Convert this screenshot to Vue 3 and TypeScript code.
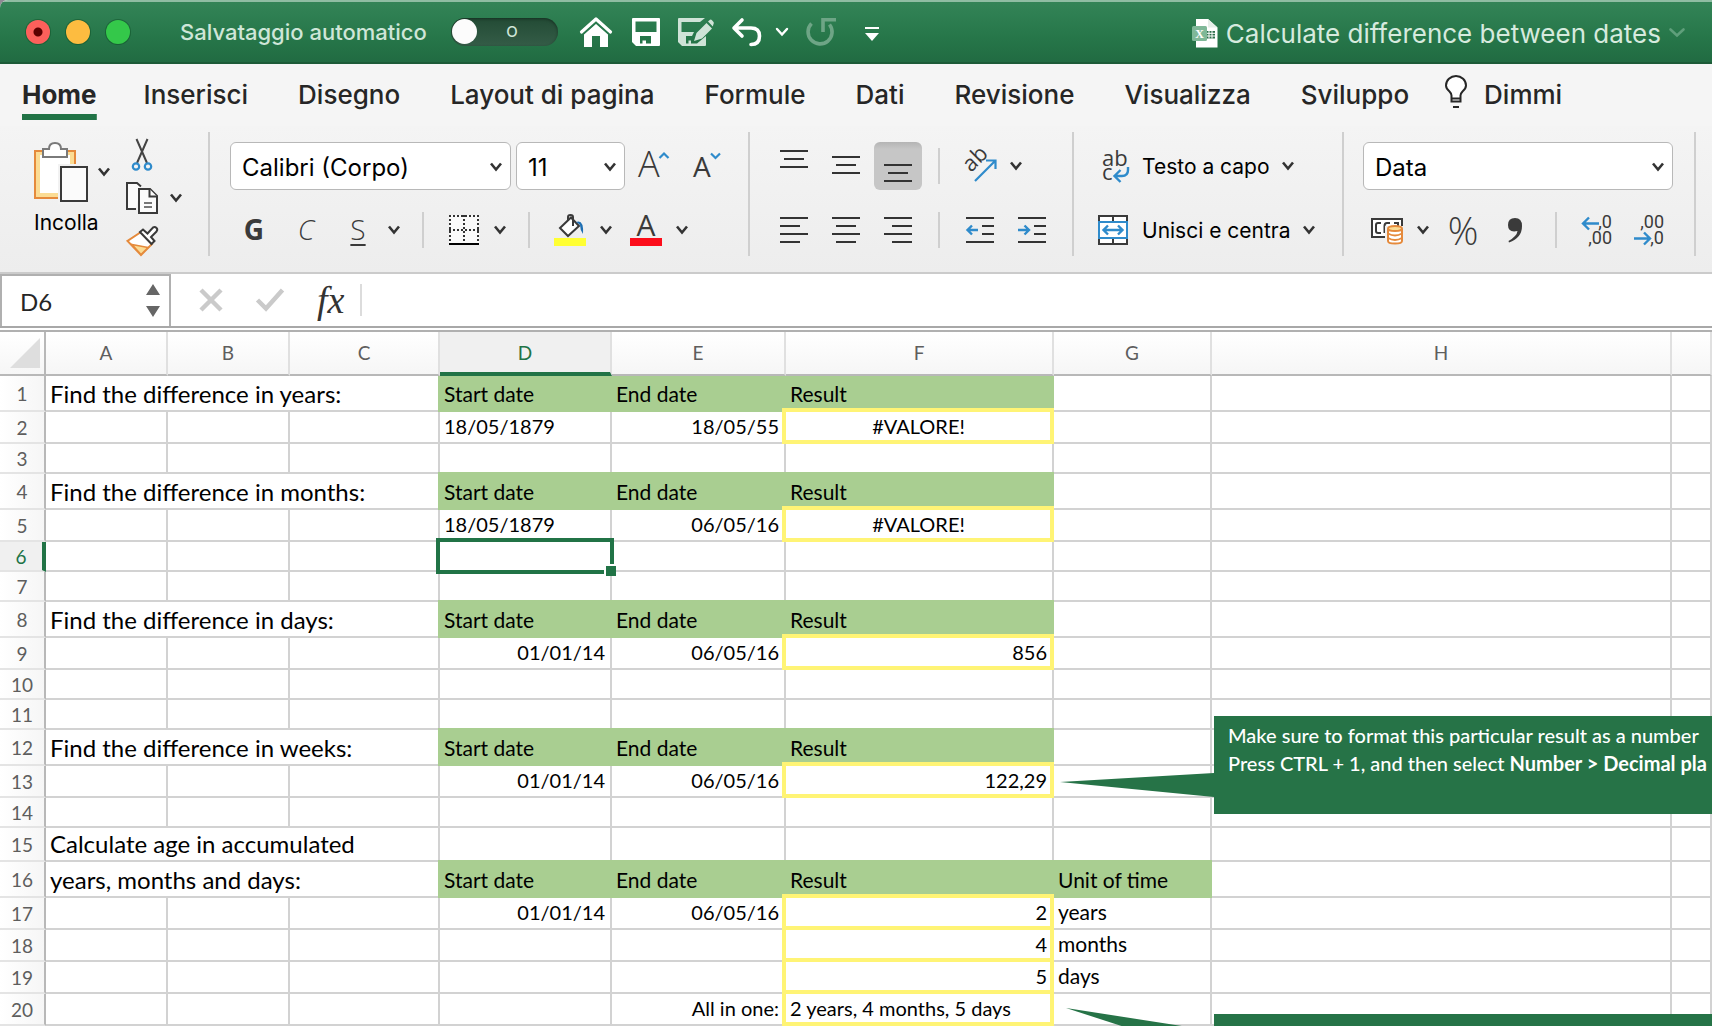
<script setup lang="ts">
import { h, ref } from 'vue'

interface Row {
  n: number
  height: number
  label?: string
  head?: boolean
  start?: string
  startText?: boolean
  end?: string
  result?: string
  resultAlign?: 'left' | 'center' | 'right'
  unit?: string
}

const tabs = ['Home', 'Inserisci', 'Disegno', 'Layout di pagina', 'Formule', 'Dati', 'Revisione', 'Visualizza', 'Sviluppo']
const activeTab = ref('Home')
const autosave = ref(false)
const cellName = ref('D6')
const formula = ref('')

const columns = ['A', 'B', 'C', 'D', 'E', 'F', 'G', 'H', '']

const header = { head: true, start: 'Start date', end: 'End date', result: 'Result' }

const rows: Row[] = [
  { n: 1, height: 36, label: 'Find the difference in years:', ...header },
  { n: 2, height: 32, start: '18/05/1879', startText: true, end: '18/05/55', result: '#VALORE!', resultAlign: 'center' },
  { n: 3, height: 30 },
  { n: 4, height: 36, label: 'Find the difference in months:', ...header },
  { n: 5, height: 32, start: '18/05/1879', startText: true, end: '06/05/16', result: '#VALORE!', resultAlign: 'center' },
  { n: 6, height: 30 },
  { n: 7, height: 30 },
  { n: 8, height: 36, label: 'Find the difference in days:', ...header },
  { n: 9, height: 32, start: '01/01/14', end: '06/05/16', result: '856', resultAlign: 'right' },
  { n: 10, height: 30 },
  { n: 11, height: 30 },
  { n: 12, height: 36, label: 'Find the difference in weeks:', ...header },
  { n: 13, height: 32, start: '01/01/14', end: '06/05/16', result: '122,29', resultAlign: 'right' },
  { n: 14, height: 30 },
  { n: 15, height: 34, label: 'Calculate age in accumulated' },
  { n: 16, height: 36, label: 'years, months and days:', ...header, unit: 'Unit of time' },
  { n: 17, height: 32, start: '01/01/14', end: '06/05/16', result: '2', resultAlign: 'right', unit: 'years' },
  { n: 18, height: 32, result: '4', resultAlign: 'right', unit: 'months' },
  { n: 19, height: 32, result: '5', resultAlign: 'right', unit: 'days' },
  { n: 20, height: 32, end: 'All in one:', result: '2 years, 4 months, 5 days', resultAlign: 'left' },
]

const Chevron = () =>
  h('svg', { class: 'chevron', width: 12, height: 10, viewBox: '0 0 12 10', 'aria-hidden': 'true' }, [
    h('path', { d: 'M1 1.5L6 7.5L11 1.5', fill: 'none', stroke: 'currentColor', 'stroke-width': 2.6 }),
  ])
</script>

<template>
  <div class="window">
    <header class="titlebar">
      <div class="lights">
        <button class="light close" aria-label="Chiudi"></button>
        <button class="light minimize" aria-label="Riduci"></button>
        <button class="light zoom" aria-label="Ingrandisci"></button>
      </div>
      <label class="autosave">
        <span>Salvataggio automatico</span>
        <span class="switch">
          <input v-model="autosave" type="checkbox" />
          <span class="state">O</span>
        </span>
      </label>
      <div class="quick">
        <button class="home" aria-label="Home">
          <svg width="32" height="32" viewBox="0 0 32 32">
            <path d="M1.500 16L16 3L30.500 16" fill="none" stroke="#fff" stroke-width="3.200" stroke-linecap="round" stroke-linejoin="round" />
            <path d="M4 18L16 7.500L28 18V31H20V20H12V31H4Z" fill="#fff" />
            <path d="M3 18.500L16 7L29 18.500" fill="none" stroke="#2a7a4e" stroke-width="1.400" />
          </svg>
        </button>
        <button class="save" aria-label="Salva">
          <svg width="28" height="28" viewBox="0 0 28 28">
            <path fill="#fff" fill-rule="evenodd" d="M1 0H27Q28 0 28 1V27Q28 28 27 28H4L0 24V1Q0 0 1 0ZM3.500 3.500V14H24.500V3.500ZM8 18V25.500H10.500V22.500H14V25.500H19V18Z" />
          </svg>
        </button>
        <button class="edit" aria-label="Salva con nome">
          <svg width="36" height="32" viewBox="0 0 36 32">
            <path fill="#cfe3d7" fill-rule="evenodd" d="M1 2H27L22 6H3.500V16H16L14 20H8V27.500H10.500V24.500H13V27.500H19L28 20V29Q28 30 27 30H4L0 26V3Q0 2 1 2Z" />
            <path fill="#cfe3d7" d="M16 25L18.500 17L28.500 7L34 12.500L24 22.500ZM30 5.500L32 3.800Q33 3.200 34 4.200L35.500 6Q36.300 7 35.500 8L34.800 10.500Z" />
          </svg>
        </button>
        <button class="undo" aria-label="Annulla">
          <svg width="32" height="30" viewBox="0 0 32 30" fill="none" stroke="#fff" stroke-width="3.600" stroke-linecap="round" stroke-linejoin="round">
            <path d="M11 3L3 11L11 19M3.500 11H20Q28.500 11 28.500 19Q28.500 27.500 20 27.500" />
          </svg>
        </button>
        <button class="more" aria-label="Altre azioni da annullare">
          <svg width="12" height="10" viewBox="0 0 12 10"><path d="M1 2L6 7.500L11 2" fill="none" stroke="#fff" stroke-width="2.400" stroke-linecap="round" /></svg>
        </button>
        <button class="redo" aria-label="Ripeti">
          <svg width="32" height="32" viewBox="0 0 32 32" fill="none" stroke="#6ea586" stroke-width="3.600">
            <path d="M6.500 7.500A12 12 0 1 0 24.500 8.500" /><path d="M18 16V3.800H31" />
          </svg>
        </button>
        <button class="customize" aria-label="Personalizza">
          <svg width="14" height="16" viewBox="0 0 14 16"><path d="M0 1H14V3H0ZM0 7H14L7 15Z" fill="#fff" /></svg>
        </button>
      </div>
      <button class="doc">
        <svg width="26" height="30" viewBox="0 0 26 30">
          <path d="M4 1H16L25.500 9.500V29.500H4Z" fill="#fff" />
          <path d="M16 1V9.500H25.500" fill="#e6efe9" />
          <path d="M14 13H23V20.500H14Z" fill="#2c6f4b" />
          <path d="M14 15.300H23M14 18H23M17 13V20.500M20 13V20.500" stroke="#fff" stroke-width="1" />
          <rect x="0" y="8" width="15" height="15" rx="1.500" fill="#7fb898" />
          <text x="7.500" y="19.500" text-anchor="middle" class="x-mark">X</text>
        </svg>
        <span>Calculate difference between dates</span>
        <svg width="16" height="10" viewBox="0 0 16 10"><path d="M1.500 1.500L8 7.500L14.500 1.500" fill="none" stroke="#5f9f7b" stroke-width="2.600" stroke-linecap="round" /></svg>
      </button>
    </header>

    <nav class="tabs" role="tablist">
      <button v-for="tab in tabs" :key="tab" role="tab" :aria-selected="tab === activeTab" :class="{ active: tab === activeTab }" @click="activeTab = tab">{{ tab }}</button>
      <button class="tell">
        <svg width="22" height="34" viewBox="0 0 22 34" fill="none" stroke="#262626" stroke-width="2">
          <path d="M6.500 23.500V20.500Q6.500 18.500 4.500 16.500Q1 13.500 1 10.500A10 9.500 0 0 1 21 10.500Q21 13.500 17.500 16.500Q15.500 18.500 15.500 20.500V26.500H6.500V23.500H15.500" fill="#fff" />
          <path d="M8 32H14" />
        </svg>
        <span>Dimmi</span>
      </button>
    </nav>

    <section class="ribbon" aria-label="Home">
      <div class="group clipboard">
        <button class="paste">
          <svg width="54" height="62" viewBox="0 0 54 62">
            <path d="M1 9H41V56H1Z" fill="#fbdc94" stroke="#e58a3c" stroke-width="2" />
            <path d="M6 13H36V51H6Z" fill="#fff" />
            <path d="M9 15V7H15Q15 1 21 1Q27 1 27 7H33V15Z" fill="#fff" stroke="#7a7a7a" stroke-width="2" />
            <path d="M24 22H54V62H24Z" fill="#f2f2f2" />
            <path d="M27 25H53V59H27Z" fill="#fbfbfb" stroke="#3a3a3a" stroke-width="2" />
          </svg>
          <span>Incolla</span>
        </button>
        <button class="drop paste-drop" aria-label="Opzioni incolla"><Chevron /></button>
        <div class="clip-tools">
          <button class="tool" aria-label="Taglia">
            <svg width="32" height="32" viewBox="0 0 32 32" fill="none">
              <path d="M10.500 1L21 25M21.500 1L11 25" stroke="#444" stroke-width="2" />
              <circle cx="10" cy="28.500" r="3.200" stroke="#2f8bcb" stroke-width="2.200" /><circle cx="22" cy="28.500" r="3.200" stroke="#2f8bcb" stroke-width="2.200" />
            </svg>
          </button>
          <div class="copy">
            <button class="tool" aria-label="Copia">
              <svg width="32" height="32" viewBox="0 0 32 32" fill="#fbfbfb" stroke="#3a3a3a" stroke-width="2">
                <path d="M10 27H1V1H11L15 4.500" />
                <path d="M13 7H24L31 14V31H13Z" /><path d="M23.500 7V14.500H31" />
                <path d="M18 21H26M18 25H26" stroke="#777" />
              </svg>
            </button>
            <button class="drop" aria-label="Opzioni copia"><Chevron /></button>
          </div>
          <button class="tool" aria-label="Copia formato">
            <svg width="32" height="32" viewBox="0 0 32 32" fill="none">
              <path d="M15 6L1.500 15L15 29L26 18Z" fill="#fff" stroke="#e58a3c" stroke-width="2" />
              <path d="M6 18.500L22 21.500L15 28.500Z" fill="#fbdc94" stroke="#e58a3c" stroke-width="1.500" />
              <path d="M14 6L17 3.500L21.500 7.500L27 1.500Q29 .5 30.500 2Q32 3.500 30.500 5.500L25 11L28.500 15L25.500 18Z" fill="#fff" stroke="#3a3a3a" stroke-width="2" />
            </svg>
          </button>
        </div>
      </div>

      <div class="group font">
        <div class="line">
          <div class="combo family">
            <select aria-label="Tipo di carattere"><option>Calibri (Corpo)</option></select>
            <Chevron />
          </div>
          <div class="combo size">
            <select aria-label="Dimensione carattere"><option>11</option></select>
            <Chevron />
          </div>
          <button class="tool wide" aria-label="Aumenta dimensione carattere">
            <svg width="32" height="32" viewBox="0 0 32 32">
              <text x="0" y="27" class="glyph big">A</text>
              <path d="M21.500 8L26 3.500L30.500 8" fill="none" stroke="#2f8bcb" stroke-width="2.200" />
            </svg>
          </button>
          <button class="tool wide" aria-label="Riduci dimensione carattere">
            <svg width="32" height="32" viewBox="0 0 32 32">
              <text x="1" y="27" class="glyph mid">A</text>
              <path d="M19 3.500L23.500 8L28 3.500" fill="none" stroke="#2f8bcb" stroke-width="2.200" />
            </svg>
          </button>
        </div>
        <div class="line tools">
          <button class="tool style bold">G</button>
          <button class="tool style italic">C</button>
          <div class="split">
            <button class="tool style underline">S</button>
            <button class="drop" aria-label="Opzioni sottolineato"><Chevron /></button>
          </div>
          <span class="rule"></span>
          <div class="split">
            <button class="tool" aria-label="Bordi">
              <svg width="30" height="30" viewBox="0 0 30 30" fill="none">
                <path d="M0 0H30V30H0Z" fill="#fafafa" />
                <path d="M0 1H30M0 15H30M1 0V28M15 0V28M29 0V28" stroke="#333" stroke-width="2" stroke-dasharray="2 2" />
                <path d="M0 29H30" stroke="#000" stroke-width="2" />
              </svg>
            </button>
            <button class="drop" aria-label="Opzioni bordi"><Chevron /></button>
          </div>
          <span class="rule"></span>
          <div class="split">
            <button class="tool" aria-label="Colore riempimento">
              <svg width="32" height="32" viewBox="0 0 32 32" fill="none">
                <path d="M6 14L17 3.500L25 12L14 22Z" fill="#fff" stroke="#3a3a3a" stroke-width="2" />
                <path d="M14 7V3Q14 1 16.500 1Q19 1 19 3V12" stroke="#3a3a3a" stroke-width="2" />
                <path d="M22 8Q30 5 29 20Q26 16 26 11Q24 9 22 8Z" fill="#1e6fb3" />
                <path d="M0 24H32V32H0Z" fill="#ffff33" />
              </svg>
            </button>
            <button class="drop" aria-label="Scegli colore riempimento"><Chevron /></button>
          </div>
          <div class="split">
            <button class="tool" aria-label="Colore carattere">
              <svg width="32" height="32" viewBox="0 0 32 32">
                <text x="16" y="22" text-anchor="middle" class="glyph color">A</text>
                <path d="M0 24H32V32H0Z" fill="#fc0d1b" />
              </svg>
            </button>
            <button class="drop" aria-label="Scegli colore carattere"><Chevron /></button>
          </div>
        </div>
      </div>

      <div class="group align">
        <div class="line tools">
          <button class="tool" aria-label="Allinea in alto">
            <svg width="28" height="32" viewBox="0 0 28 32"><path d="M0 1H28M4 9H24M0 17H28" class="bars" /></svg>
          </button>
          <button class="tool" aria-label="Allinea al centro">
            <svg width="28" height="32" viewBox="0 0 28 32"><path d="M0 7H28M4 15H24M0 23H28" class="bars" /></svg>
          </button>
          <button class="tool pressed" aria-label="Allinea in basso" aria-pressed="true">
            <svg width="28" height="32" viewBox="0 0 28 32"><path d="M0 15H28M4 23H24M0 31H28" class="bars" /></svg>
          </button>
          <span class="rule"></span>
          <div class="split">
            <button class="tool" aria-label="Orientamento">
              <svg width="34" height="34" viewBox="0 0 34 34">
                <text transform="translate(8 24) rotate(-45)" class="glyph ab">ab</text>
                <path d="M12 32L32 12M23 11.500H32.500V20" fill="none" stroke="#2f8bcb" stroke-width="2.200" />
              </svg>
            </button>
            <button class="drop" aria-label="Opzioni orientamento"><Chevron /></button>
          </div>
        </div>
        <div class="line tools">
          <button class="tool" aria-label="Allinea a sinistra">
            <svg width="28" height="26" viewBox="0 0 28 26"><path d="M0 1H28M0 9H20M0 17H28M0 25H20" class="bars" /></svg>
          </button>
          <button class="tool" aria-label="Centra">
            <svg width="28" height="26" viewBox="0 0 28 26"><path d="M0 1H28M4 9H24M0 17H28M4 25H24" class="bars" /></svg>
          </button>
          <button class="tool" aria-label="Allinea a destra">
            <svg width="28" height="26" viewBox="0 0 28 26"><path d="M0 1H28M8 9H28M0 17H28M8 25H28" class="bars" /></svg>
          </button>
          <span class="rule"></span>
          <button class="tool" aria-label="Riduci rientro">
            <svg width="28" height="26" viewBox="0 0 28 26">
              <path d="M0 1H28M16 9H28M16 17H28M0 25H28" class="bars" />
              <path d="M12 13H2M6 8.500L1.500 13L6 17.500" class="arrow" />
            </svg>
          </button>
          <button class="tool" aria-label="Aumenta rientro">
            <svg width="28" height="26" viewBox="0 0 28 26">
              <path d="M0 1H28M16 9H28M16 17H28M0 25H28" class="bars" />
              <path d="M0 13H10M6.500 8.500L11 13L6.500 17.500" class="arrow" />
            </svg>
          </button>
        </div>
      </div>

      <div class="group cells">
        <div class="line">
          <button class="named">
            <svg width="34" height="34" viewBox="0 0 34 34">
              <text x="6" y="17" class="glyph ab">ab</text>
              <text x="6" y="31" class="glyph ab">c</text>
              <path d="M32 18V21Q32 27 26 27H20M24.500 21L18.500 27L24.500 33" class="arrow" />
            </svg>
            <span>Testo a capo</span>
            <Chevron />
          </button>
        </div>
        <div class="line">
          <button class="named">
            <svg width="34" height="34" viewBox="0 0 34 34" fill="none">
              <path d="M3 3H31V31H3Z" fill="#fff" stroke="#3a3a3a" stroke-width="2" />
              <path d="M17 3V31" stroke="#3a3a3a" stroke-width="2" />
              <path d="M3 9H31V25H3Z" fill="#fff" stroke="#2f8bcb" stroke-width="2" />
              <path d="M8 17H26M12 12.500L7.500 17L12 21.500M22 12.500L26.500 17L22 21.500" class="arrow" />
            </svg>
            <span>Unisci e centra</span>
            <Chevron />
          </button>
        </div>
      </div>

      <div class="group number">
        <div class="line">
          <div class="combo format">
            <select aria-label="Formato numero"><option>Data</option></select>
            <Chevron />
          </div>
        </div>
        <div class="line tools">
          <div class="split">
            <button class="tool" aria-label="Formato contabilità">
              <svg width="32" height="28" viewBox="0 0 32 28" fill="none">
                <path d="M1 3H31V21H1Z" fill="#fff" stroke="#3a3a3a" stroke-width="2" />
                <path d="M10 7H7Q5 7 5 9V15Q5 17 7 17H10M19 7H16Q13.500 7 13.500 10V17M23 7H27V12" stroke="#3a3a3a" stroke-width="2" />
                <path d="M14 10H32V28H14Z" fill="#f0f0f0" />
                <path d="M17 13V25Q17 27.500 24 27.500Q31 27.500 31 25V13" fill="#fff" stroke="#e58a3c" stroke-width="2" />
                <ellipse cx="24" cy="12.500" rx="7" ry="2.600" fill="#fbdc94" stroke="#e58a3c" stroke-width="2" />
                <path d="M17 17.500Q24 21.500 31 17.500M17 22Q24 26 31 22" stroke="#e58a3c" stroke-width="2" />
              </svg>
            </button>
            <button class="drop" aria-label="Opzioni contabilità"><Chevron /></button>
          </div>
          <button class="tool percent">%</button>
          <button class="tool" aria-label="Stile separatore">
            <svg width="16" height="26" viewBox="0 0 16 26"><path d="M8 1Q15 1 15 9Q15 21 2 25.500L1.500 24Q10 19 10.500 14Q1 16 1 8Q1 1 8 1Z" fill="#3a3a3a" /></svg>
          </button>
          <span class="rule"></span>
          <button class="tool" aria-label="Aumenta decimali">
            <svg width="32" height="32" viewBox="0 0 32 32">
              <text x="31" y="14" text-anchor="end" class="glyph dec">,0</text>
              <text x="31" y="30" text-anchor="end" class="glyph dec">,00</text>
              <path d="M18 9.500H2M8 3.500L2 9.500L8 15.500" class="arrow" />
            </svg>
          </button>
          <button class="tool" aria-label="Diminuisci decimali">
            <svg width="32" height="32" viewBox="0 0 32 32">
              <text x="31" y="14" text-anchor="end" class="glyph dec">,00</text>
              <text x="31" y="30" text-anchor="end" class="glyph dec">,0</text>
              <path d="M1 24.500H17M11 18.500L17 24.500L11 30.500" class="arrow" />
            </svg>
          </button>
        </div>
      </div>
    </section>

    <section class="formula-bar">
      <div class="name-box">
        <input v-model="cellName" aria-label="Casella nome" />
        <svg width="14" height="34" viewBox="0 0 14 34"><path d="M7 0L14 11H0ZM0 22H14L7 33Z" fill="#666" /></svg>
      </div>
      <button aria-label="Annulla immissione">
        <svg width="24" height="24" viewBox="0 0 24 24"><path d="M2 2L22 22M22 2L2 22" stroke="#cacaca" stroke-width="4.500" /></svg>
      </button>
      <button aria-label="Conferma immissione">
        <svg width="28" height="24" viewBox="0 0 28 24"><path d="M1.500 12L10 20.500L26.500 2" fill="none" stroke="#cacaca" stroke-width="4.500" /></svg>
      </button>
      <button class="fx">fx</button>
      <input v-model="formula" class="formula" aria-label="Barra della formula" />
    </section>

    <section class="sheet">
      <table>
        <colgroup>
          <col class="w-head" />
          <col class="w-a" />
          <col class="w-a" />
          <col class="w-c" />
          <col class="w-d" />
          <col class="w-e" />
          <col class="w-f" />
          <col class="w-g" />
          <col class="w-h" />
          <col />
        </colgroup>
        <thead>
          <tr>
            <th class="corner"><svg width="30" height="30" viewBox="0 0 30 30"><path d="M30 0V30H0Z" fill="#dedede" /></svg></th>
            <th v-for="c in columns" :key="c" :class="{ current: c === 'D' }">{{ c }}</th>
          </tr>
        </thead>
        <tbody>
          <tr v-for="r in rows" :key="r.n" :style="{ height: r.height + 'px' }">
            <th :class="{ current: r.n === 6 }">{{ r.n }}</th>
            <td v-if="r.label" colspan="3" class="label">{{ r.label }}</td>
            <template v-else>
              <td></td>
              <td></td>
              <td></td>
            </template>
            <td :class="{ head: r.head, right: r.start && !r.head && !r.startText, selected: r.n === 6 }">{{ r.start }}</td>
            <td :class="r.head ? 'head' : 'right'">{{ r.end }}</td>
            <td :class="[r.head ? 'head' : r.result ? 'result' : '', r.resultAlign]">{{ r.result }}</td>
            <td class="unit" :class="{ head: r.head && r.unit }">{{ r.unit }}</td>
            <td></td>
            <td></td>
          </tr>
        </tbody>
      </table>
      <aside class="callout weeks">
        <svg class="tail" width="154" height="24" viewBox="0 0 154 24"><path d="M0 9L154 0V24Z" fill="#267347" /></svg>
        <p>Make sure to format this particular result as a number</p>
        <p>Press CTRL + 1, and then select <b>Number &gt; Decimal pla</b></p>
      </aside>
      <aside class="callout age">
        <svg class="tail" width="148" height="48" viewBox="0 0 148 48"><path d="M0 0L148 23V48Z" fill="#267347" /></svg>
      </aside>
    </section>
  </div>
</template>

<style>
body {
  margin: 0;
  background: #8f8a94;
}
</style>

<style scoped>
.window {
  min-height: 100vh;
  overflow: hidden;
  border-radius: 8px 0 0 0;
  background: #fff;
  color: #262626;
  font-family: Inter, Roboto, sans-serif;
}

button {
  display: flex;
  align-items: center;
  justify-content: center;
  flex: none;
  margin: 0;
  padding: 0;
  border: 0;
  background: none;
  color: inherit;
  font: inherit;
}

svg {
  display: block;
  flex: none;
  overflow: visible;
}

/* Title bar */
.titlebar {
  display: flex;
  align-items: center;
  box-sizing: border-box;
  height: 64px;
  padding: 0 27px 0 26px;
  border-top: 2px solid #8fbda3;
  border-bottom: 2px solid #1d5b38;
  background: linear-gradient(#338457, #267649 60%, #216b42);
}

.lights {
  display: flex;
  gap: 16px;
}

.light {
  width: 24px;
  height: 24px;
  border-radius: 50%;
  box-shadow: 0 0 0 1px rgba(0, 60, 20, 0.35);
}

.close {
  background: radial-gradient(circle, #5c0000 0 4px, #fc605b 5px);
}

.minimize {
  background: #fdbc40;
}

.zoom {
  background: #34c84a;
}

.autosave {
  display: flex;
  align-items: center;
  gap: 24px;
  margin-left: 50px;
  color: #cfe6d8;
  font-size: 22px;
  font-weight: 500;
}

.switch {
  position: relative;
  display: flex;
}

.switch input {
  appearance: none;
  width: 107px;
  height: 28px;
  margin: 0;
  border-radius: 14px;
  background: linear-gradient(#234b35, #345c47);
  box-shadow: inset 0 1px 3px rgba(0, 0, 0, 0.4);
}

.switch input::before {
  content: '';
  display: block;
  width: 25px;
  height: 25px;
  margin: 1px;
  border-radius: 50%;
  background: #fcfcfc;
}

.state {
  position: absolute;
  right: 40px;
  top: 5px;
  font-size: 15px;
  line-height: 18px;
}

.quick {
  display: flex;
  align-items: center;
  margin-left: 22px;
}

.save {
  margin-left: 20px;
}

.edit {
  margin-left: 18px;
}

.undo {
  margin-left: 17px;
}

.more {
  margin-left: 13px;
}

.redo {
  margin-left: 17px;
}

.customize {
  margin: 3px 0 0 28px;
}

.doc {
  margin-left: auto;
  padding-top: 2px;
  color: #d6eade;
  font-size: 26px;
  gap: 8px;
}

.x-mark {
  fill: #fff;
  font: bold 12px 'Liberation Serif', serif;
}

/* Tabs */
.tabs {
  display: flex;
  align-items: flex-start;
  gap: 50px;
  height: 62px;
  padding: 0 22px;
  background: #f5f5f5;
  font-size: 26px;
  font-weight: 500;
}

.tabs button {
  box-sizing: border-box;
  height: 56px;
  padding: 10px 0 6px;
}

.tabs .active {
  margin-right: -3px;
  font-weight: 700;
  background: linear-gradient(#217346, #217346) bottom / 100% 6px no-repeat;
}

.tabs .tell {
  gap: 17px;
  margin-left: -14px;
}

.tell svg {
  margin-bottom: 4px;
}

/* Ribbon */
.ribbon {
  display: flex;
  padding: 6px 0 16px;
  border-bottom: 2px solid #cbcbcb;
  background: linear-gradient(#f4f4f4, #ededed);
}

.group {
  display: flex;
  flex-direction: column;
  flex: none;
  gap: 16px;
  box-sizing: border-box;
  height: 124px;
  padding-top: 10px;
  border-right: 2px solid #cfcfcf;
}

.line {
  display: flex;
  align-items: center;
  height: 48px;
}

.tools {
  gap: 4px;
}

.tool {
  width: 48px;
  height: 48px;
}

.wide {
  width: 54px;
}

.pressed {
  border-radius: 6px;
  background: linear-gradient(#b4b4b4, #c6c6c6 15%);
}

.drop {
  width: 20px;
  height: 48px;
}

.chevron {
  color: #333;
}

.split {
  display: flex;
  gap: 2px;
}

.split + .split,
.split + .tool {
  margin-left: 2px;
}

.rule {
  width: 2px;
  height: 36px;
  margin: 0 12px 0 14px;
  background: #cfcfcf;
}

.align .rule,
.number .rule {
  margin-left: 12px;
}

.clipboard {
  flex-direction: row;
  gap: 0;
  padding: 6px 26px 0 34px;
}

.paste {
  flex-direction: column;
  align-items: flex-start;
  justify-content: flex-start;
  gap: 6px;
  width: 64px;
  padding-top: 4px;
  color: #000;
  font-size: 21px;
  line-height: 26px;
}

.paste span {
  white-space: nowrap;
}

.paste-drop,
.copy .drop {
  width: 12px;
  height: 32px;
}

.paste-drop {
  margin: 18px 16px 0 0;
}

.clip-tools {
  display: flex;
  flex-direction: column;
  gap: 12px;
}

.clip-tools .tool {
  width: 32px;
  height: 32px;
}

.copy {
  display: flex;
  gap: 12px;
}

.font {
  padding-left: 20px;
  padding-right: 13px;
}

.align {
  padding-left: 20px;
  padding-right: 16px;
}

.cells {
  min-width: 270px;
  padding-left: 22px;
}

.number {
  padding-left: 19px;
  padding-right: 21px;
}

.combo {
  position: relative;
  height: 48px;
}

.combo select {
  appearance: none;
  box-sizing: border-box;
  width: 100%;
  height: 48px;
  padding: 2px 11px 0;
  border: 1px solid #b8b8b8;
  border-radius: 6px;
  background: #fff;
  color: #000;
  font: 24px Inter, Roboto, sans-serif;
}

.combo .chevron {
  position: absolute;
  right: 9px;
  top: 20px;
}

.family {
  width: 281px;
  margin-right: 5px;
}

.size {
  width: 109px;
  margin-right: 2px;
}

.format {
  width: 310px;
}

.named {
  gap: 12px;
  height: 48px;
  color: #000;
  font-size: 21px;
}

.style {
  padding-bottom: 2px;
  font-family: 'Open Sans', 'Noto Sans', sans-serif;
  font-size: 28px;
  color: #3a3a3a;
}

.bold {
  font-weight: 700;
}

.italic {
  font-style: italic;
  font-weight: 300;
}

.underline {
  font-weight: 300;
  text-decoration: underline 2px;
  text-underline-offset: 4px;
}

.percent {
  color: #3a3a3a;
  font-family: 'Open Sans', 'Noto Sans', sans-serif;
  font-size: 38px;
  font-weight: 300;
}

.glyph {
  fill: #3a3a3a;
  font-family: 'Open Sans', 'Noto Sans', sans-serif;
}

.big {
  font-size: 36px;
  font-weight: 300;
}

.mid {
  font-size: 28px;
}

.color {
  font-size: 30px;
}

.ab {
  font-size: 22px;
}

.dec {
  font-family: Roboto, sans-serif;
  font-size: 18px;
}

.bars {
  stroke: #333;
  stroke-width: 2;
}

.arrow {
  fill: none;
  stroke: #2f8bcb;
  stroke-width: 2.4;
}

/* Formula bar */
.formula-bar {
  display: flex;
  align-items: center;
  height: 52px;
  border-bottom: 2px solid #a8a8a8;
}

.name-box {
  display: flex;
  align-items: center;
  box-sizing: border-box;
  width: 171px;
  height: 52px;
  margin-right: 28px;
  padding-right: 9px;
  border: 2px solid #b0b0b0;
  border-bottom: 0;
}

.name-box input {
  flex: 1;
  min-width: 0;
  padding: 0 18px;
  border: 0;
  outline: 0;
  background: none;
  color: #262626;
  font: 24px Lato, sans-serif;
}

.formula-bar button {
  margin-right: 33px;
}

.formula-bar .fx {
  margin-right: 16px;
  color: #333;
  font: italic 38px 'Liberation Serif', serif;
}

.formula {
  flex: 1;
  height: 32px;
  padding: 0 12px;
  border: 0;
  border-left: 2px solid #dcdcdc;
  outline: 0;
  background: none;
  font: 22px Lato, sans-serif;
}

/* Grid */
.sheet {
  position: relative;
  overflow: hidden;
  margin-top: 2px;
  border-top: 2px solid #b0b0b0;
  font-family: Lato, 'Open Sans', sans-serif;
}

table {
  width: 100%;
  min-width: 1712px;
  table-layout: fixed;
  border-collapse: separate;
  border-spacing: 0;
}

.w-head {
  width: 46px;
}

.w-a {
  width: 122px;
}

.w-c {
  width: 150px;
}

.w-d {
  width: 172px;
}

.w-e {
  width: 174px;
}

.w-f {
  width: 268px;
}

.w-g {
  width: 158px;
}

.w-h {
  width: 460px;
}

th,
td {
  box-sizing: border-box;
  padding: 0;
  border-right: 2px solid #d2d2d2;
  border-bottom: 2px solid #d2d2d2;
  white-space: nowrap;
}

th {
  color: #5e5e5e;
  font-size: 19px;
  font-weight: 400;
  line-height: 24px;
}

thead th {
  height: 44px;
  border-right-color: #e0e0e0;
  border-bottom-color: #b8b8b8;
  background: linear-gradient(#fff, #f6f6f6);
}

thead .current {
  padding-top: 2px;
  border-bottom: 4px solid #217346;
  background: #f0f0f0;
  color: #217346;
}

thead .corner {
  padding-left: 10px;
  border-right-color: #b8b8b8;
}

tbody th {
  padding-top: 2px;
  border-right-color: #b8b8b8;
  border-bottom-color: #e4e4e4;
  background: linear-gradient(90deg, #fff, #f6f6f6);
}

tbody .current {
  border-right: 4px solid #217346;
  background: #f0f0f0;
  color: #217346;
}

td {
  padding: 0 5px 4px 4px;
  color: #000;
  font-size: 20px;
  line-height: 24px;
  vertical-align: bottom;
}

.label {
  padding-bottom: 2px;
  font-size: 24px;
  line-height: 28px;
}

.right {
  text-align: right;
}

.center {
  text-align: center;
}

.head,
.unit {
  font-size: 21px;
}

.head {
  border-color: #a9ce91;
  background: #a9ce91;
  box-shadow: -2px 0 #a9ce91, 0 -2px #a9ce91, -2px -2px #a9ce91;
}

tbody tr:first-child .head {
  box-shadow: -2px 0 #a9ce91;
}

.result,
.selected {
  position: relative;
}

.result::after,
.selected::after {
  content: '';
  position: absolute;
  inset: -4px -2px -2px -4px;
  border: 4px solid #fff475;
}

.selected::after {
  inset: -4px;
  border-color: #217346;
}

.selected::before {
  content: '';
  position: absolute;
  right: -6px;
  bottom: -6px;
  z-index: 1;
  width: 10px;
  height: 10px;
  border: solid #fff;
  border-width: 2px 0 0 2px;
  background: #217346;
}

.callout {
  position: absolute;
  left: 1214px;
  right: 0;
  height: 98px;
  box-sizing: border-box;
  padding: 5px 0 0 14px;
  background: #267347;
  color: #fff;
  font-size: 20px;
  font-weight: 500;
  line-height: 28px;
  white-space: nowrap;
}

.callout p {
  margin: 0;
}

.weeks {
  top: 384px;
}

.age {
  top: 682px;
}

.tail {
  position: absolute;
  right: 100%;
}

.weeks .tail {
  top: 57px;
}

.age .tail {
  top: -6px;
}
</style>
